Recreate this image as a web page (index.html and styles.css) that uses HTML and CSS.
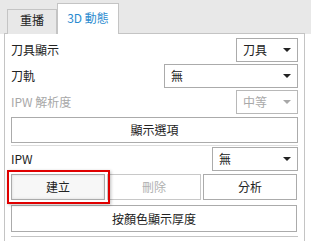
FILE: index.html
```html
<!DOCTYPE html>
<html>
<head>
<meta charset="utf-8">
<link rel="stylesheet" href="styles.css">
</head>
<body>
<div class="tabs">
  <div class="tab">重播</div>
  <div class="tab active">3D 動態</div>
</div>
<div class="panel">
  <div class="row">
    <span class="label">刀具顯示</span>
    <div class="select w62"><span>刀具</span><i class="arrow"></i></div>
  </div>
  <div class="row">
    <span class="label">刀軌</span>
    <div class="select w134"><span>無</span><i class="arrow"></i></div>
  </div>
  <div class="row disabled">
    <span class="label">IPW 解析度</span>
    <div class="select w62"><span>中等</span><i class="arrow"></i></div>
  </div>
  <div class="btn full">顯示選項</div>
  <div class="sep"></div>
  <div class="row">
    <span class="label">IPW</span>
    <div class="select w86"><span>無</span><i class="arrow"></i></div>
  </div>
  <div class="btnrow">
    <div class="focus"><div class="btn">建立</div></div>
    <div class="btn dis">刪除</div>
    <div class="btn">分析</div>
  </div>
  <div class="btn full tall">按顏色顯示厚度</div>
  <div class="more"></div>
</div>
</body>
</html>
```

FILE: styles.css
```css
* { box-sizing: border-box; }
html, body { margin: 0; padding: 0; }
body {
  width: 311px;
  height: 241px;
  overflow: hidden;
  background: #ffffff;
  font-family: "Noto Sans CJK TC", "Noto Sans", sans-serif;
  font-size: 12px;
  color: #222;
}
.tabs {
  height: 34px;
  background: #e8e8e8;
  display: flex;
  align-items: flex-end;
  padding-left: 7px;
  margin-bottom: -1px;
}
.tab {
  width: 50px;
  height: 25px;
  border: 1px solid #c4c4c4;
  border-bottom: none;
  background: #e8e8e8;
  display: flex;
  justify-content: center;
  padding-top: 2px;
  line-height: 16px;
  color: #222;
  font-size: 12px;
}
.tab.active {
  width: 62px;
  height: 31px;
  background: #ffffff;
  color: #2a8bd0;
  padding-top: 6px;
  position: relative;
  z-index: 1;
}
.panel {
  margin-left: 4px;
  width: 301px;
  height: 210px;
  border: 1px solid #c4c4c4;
  border-bottom: none;
  padding: 4px 6px 0 6px;
  background: #fff;
}
.row {
  height: 24px;
  display: flex;
  align-items: center;
  justify-content: space-between;
  margin-bottom: 2px;
}
.label { line-height: 16px; }
.select {
  height: 24px;
  border: 1px solid #ababab;
  background: #fff;
  display: flex;
  align-items: center;
  justify-content: space-between;
  padding: 0 6px 0 6px;
  line-height: 16px;
}
.w62 { width: 62px; }
.w134 { width: 134px; }
.w86 { width: 86px; }
.arrow {
  width: 0;
  height: 0;
  border-left: 4px solid transparent;
  border-right: 4px solid transparent;
  border-top: 4px solid #222;
}
.disabled .label, .disabled .select span { color: #a8a8a8; }
.disabled .arrow { border-top-color: #a8a8a8; }
.disabled .select { border-color: #b8b8b8; }
.btn {
  height: 26px;
  border: 1px solid #ababab;
  background: #fff;
  display: flex;
  align-items: center;
  justify-content: center;
  line-height: 16px;
}
.full { margin-top: 3px; width: 287px; }
.sep {
  margin-top: 2px;
  height: 2px;
  border-top: 1px solid #dcdcdc;
  width: 287px;
}
.btnrow {
  display: flex;
  gap: 2px;
  margin-top: 3px;
  width: 286px;
}
.btnrow > .btn, .btnrow > .focus { width: 94px; }
.focus { position: relative; }
.focus::after {
  content: "";
  position: absolute;
  left: -4px; top: -4px; right: -5px; bottom: -4px;
  border: 2px solid #e00000;
  box-shadow: 1px 1px 3px rgba(0,0,0,0.25);
}
.focus .btn {
  background: #f7f7f7;
  box-shadow: inset 0 0 3px rgba(0,0,0,0.12);
}
.btn.dis { color: #b0b0b0; border-color: #c8c8c8; }
.tall { margin-top: 5px; height: 27px; width: 286px; }
.more {
  margin-top: 4px;
  border-top: 1px solid #c4c4c4;
  width: 287px;
  height: 4px;
}
```
